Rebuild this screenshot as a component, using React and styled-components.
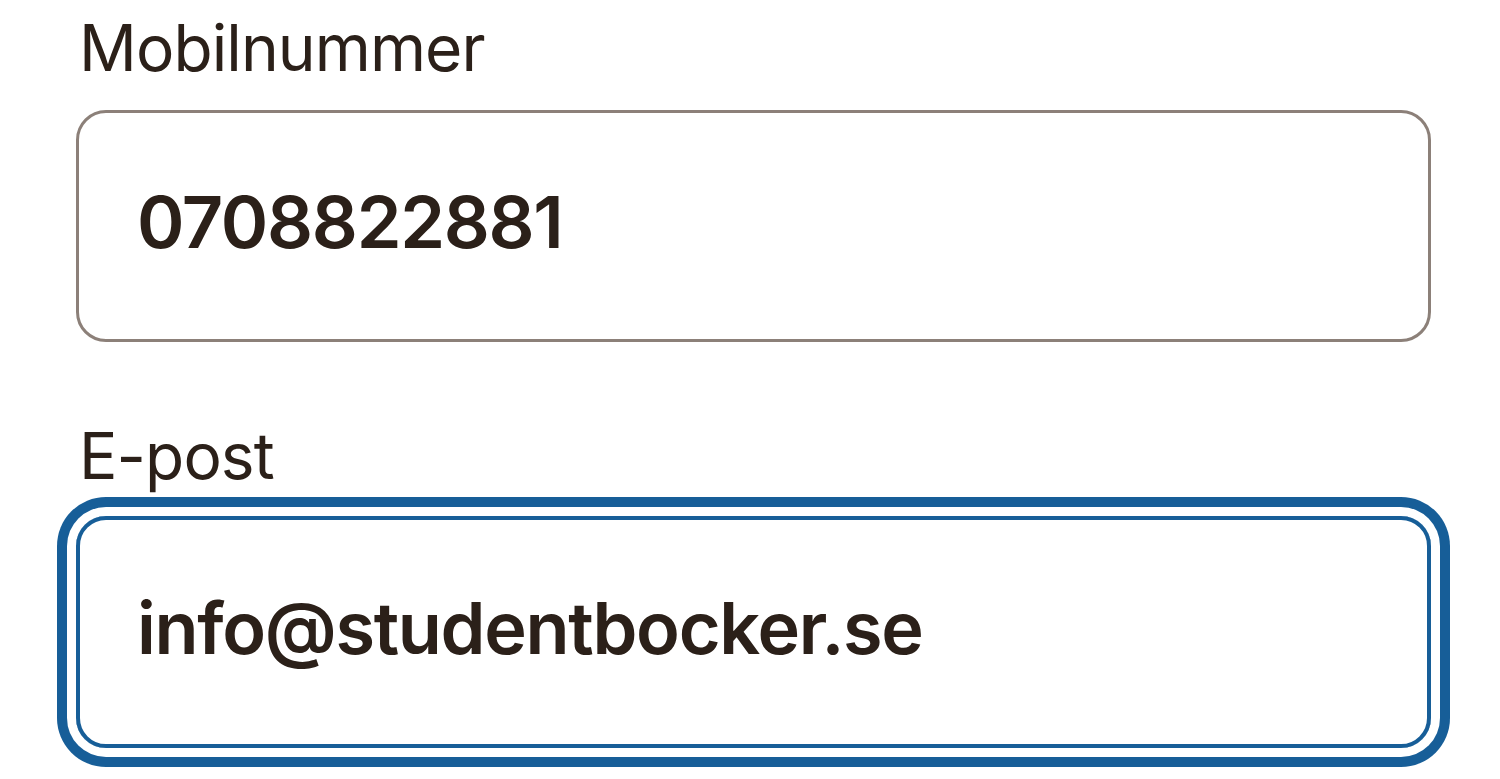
import React from "react";
import styled, { createGlobalStyle } from "styled-components";

const Global = createGlobalStyle`
  html, body { margin: 0; padding: 0; background: #ffffff; }
  body { font-family: Inter, "Noto Sans", sans-serif; color: #2b2019; }
`;

const Form = styled.div`
  width: 1500px;
  height: 779px;
  box-sizing: border-box;
  padding: 0 0 0 76px;
  display: flex;
  flex-direction: column;
`;

const Field = styled.div`
  display: flex;
  flex-direction: column;
  margin-top: ${(p) => p.$top}px;
`;

const Label = styled.label`
  font-size: 64px;
  font-weight: 400;
  line-height: 64px;
  height: 64px;
  padding-left: 3px;
  color: #2b2019;
  letter-spacing: -0.9px;
`;

const Box = styled.div`
  box-sizing: border-box;
  width: 1355px;
  height: 232px;
  margin-top: ${(p) => p.$gap}px;
  border-radius: 30px;
  border: ${(p) => (p.$focused ? "4px solid #175e98" : "3px solid #8c8079")};
  box-shadow: ${(p) =>
    p.$focused ? "0 0 0 9px #ffffff, 0 0 0 19px #175e98" : "none"};
  display: flex;
  align-items: center;
  padding-left: ${(p) => (p.$focused ? 57 : 58)}px;
  padding-bottom: 10px;
  font-size: 72px;
  font-weight: 600;
  color: #2b2019;
  letter-spacing: -1.3px;
`;

export default function App() {
  return (
    <>
      <Global />
      <Form>
        <Field $top={16}>
          <Label>Mobilnummer</Label>
          <Box $gap={30}>0708822881</Box>
        </Field>
        <Field $top={82}>
          <Label>E-post</Label>
          <Box $gap={28} $focused>
            info@studentbocker.se
          </Box>
        </Field>
      </Form>
    </>
  );
}
